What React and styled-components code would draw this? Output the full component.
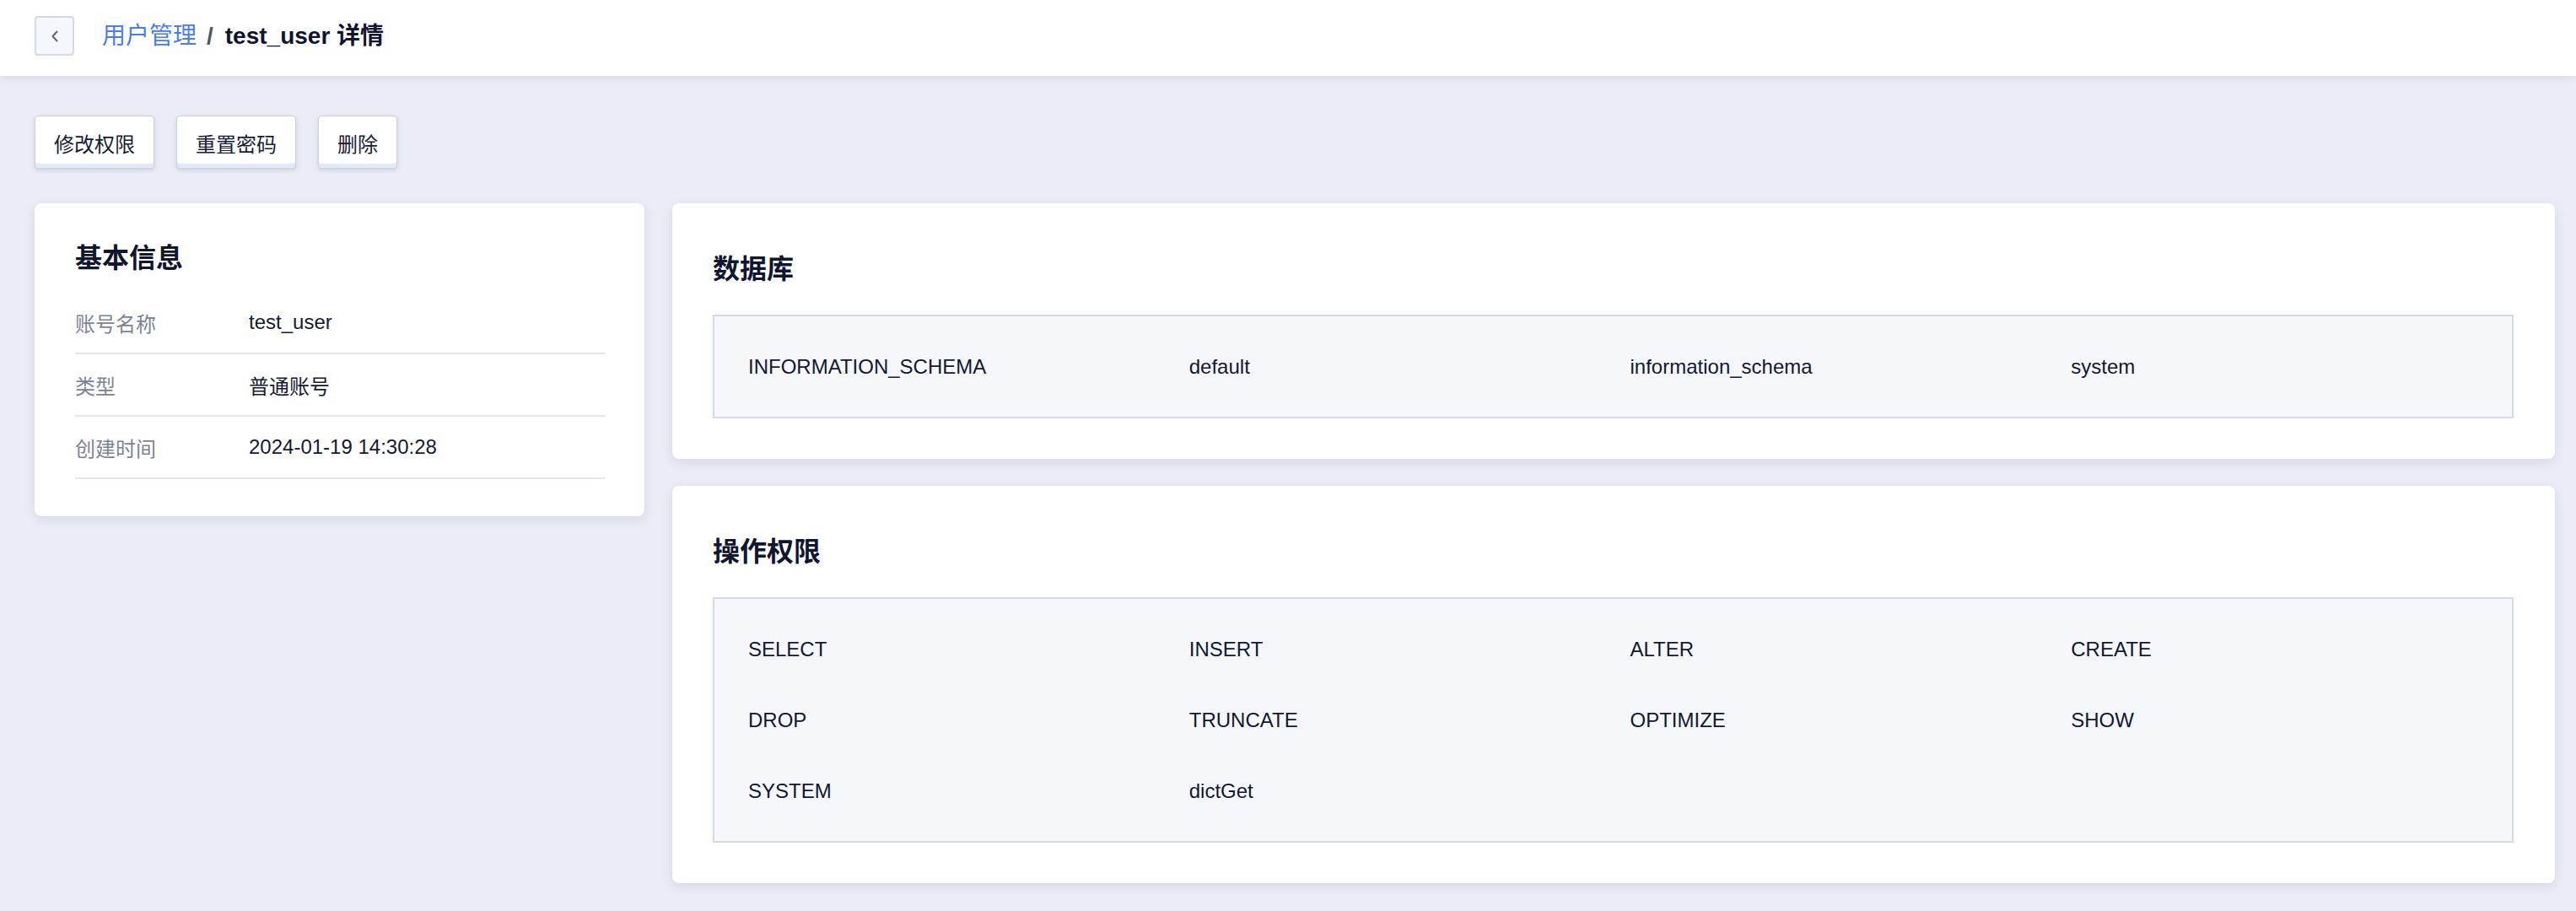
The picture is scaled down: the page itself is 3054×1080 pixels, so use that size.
import React from "react";
import styled, { createGlobalStyle } from "styled-components";

const GlobalStyle = createGlobalStyle`
  html, body {
    margin: 0;
    padding: 0;
    background: #eaedf5;
  }
  body {
    font-family: "Liberation Sans", "Noto Sans CJK SC", sans-serif;
    color: #131a33;
  }
  * { box-sizing: border-box; }
`;

const Page = styled.div`
  min-height: 100vh;
  background: #eaedf5;
`;

const Header = styled.header`
  height: 90px;
  background: #ffffff;
  box-shadow: 0 2px 10px rgba(20, 30, 60, 0.09);
  display: flex;
  align-items: flex-start;
  padding: 19px 40px 0 41px;
  position: relative;
  z-index: 1;
`;

const BackButton = styled.button`
  width: 47px;
  height: 47px;
  border: 2px solid #d3d8ea;
  border-radius: 4px;
  background: #f6f7fc;
  display: flex;
  align-items: center;
  justify-content: center;
  padding: 0;
  cursor: pointer;
`;

const Crumbs = styled.nav`
  display: flex;
  align-items: center;
  height: 47px;
  margin-left: 33px;
  font-size: 28px;
  line-height: 47px;
`;

const CrumbLink = styled.span`
  color: #4b7bf3;
`;

const Sep = styled.span`
  color: #4e5566;
  font-weight: 700;
  padding: 0 14px 0 12px;
`;

const Current = styled.span`
  color: #0f1530;
  font-weight: 700;
`;

const Main = styled.main`
  padding: 47px 25px 20px 41px;
`;

const Toolbar = styled.div`
  display: flex;
  gap: 26px;
  margin-bottom: 41px;
`;

const ActionButton = styled.button`
  height: 63px;
  padding: 2px 22px 0;
  font-family: "Liberation Sans", "Noto Sans CJK SC", sans-serif;
  font-size: 24px;
  color: #161c35;
  background: #ffffff;
  border: 1.5px solid #c9cfdf;
  border-radius: 4px;
  box-shadow: inset 0 -5px 0 #e3e8fb, 0 2px 5px rgba(30, 40, 80, 0.14);
  cursor: pointer;
`;

const Layout = styled.div`
  display: flex;
  align-items: flex-start;
  gap: 33px;
`;

const Card = styled.section`
  background: #ffffff;
  border-radius: 8px;
  box-shadow: 0 4px 14px rgba(25, 35, 75, 0.1);
`;

const InfoCard = styled(Card)`
  width: 723px;
  flex: none;
  padding: 49px 47px 44px 48px;
`;

const RightColumn = styled.div`
  flex: 1;
  display: flex;
  flex-direction: column;
  gap: 32px;
`;

const PanelCard = styled(Card)`
  padding: 62px 49px 48px 48px;
`;

const CardTitle = styled.h2`
  margin: 0;
  font-size: 32px;
  line-height: 32px;
  font-weight: 700;
  color: #10162f;
`;

const InfoList = styled.div`
  margin-top: 24px;
`;

const InfoRow = styled.div`
  display: flex;
  align-items: center;
  height: 74px;
  border-bottom: 2px solid #e3e6ef;
  font-size: 24px;
`;

const InfoLabel = styled.span`
  width: 206px;
  flex: none;
  color: #7b8497;
`;

const InfoValue = styled.span`
  color: #131a33;
`;

const TagBox = styled.div`
  margin-top: 38px;
  background: #f6f7fb;
  border: 2px solid #d5d9eb;
  padding: 48px 0 47px 40px;
  display: grid;
  grid-template-columns: repeat(4, 1fr);
  row-gap: 60px;
`;

const TagItem = styled.span`
  font-size: 24px;
  line-height: 24px;
  color: #111833;
`;

const ChevronLeft = () => (
  <svg width="10" height="14" viewBox="0 0 10 14" fill="none">
    <polyline
      points="7.5,1.5 2.5,7 7.5,12.5"
      stroke="#5f6677"
      strokeWidth="2"
      strokeLinecap="round"
      strokeLinejoin="round"
    />
  </svg>
);

const info = [
  ["账号名称", "test_user"],
  ["类型", "普通账号"],
  ["创建时间", "2024-01-19 14:30:28"],
];

const databases = ["INFORMATION_SCHEMA", "default", "information_schema", "system"];

const permissions = [
  "SELECT",
  "INSERT",
  "ALTER",
  "CREATE",
  "DROP",
  "TRUNCATE",
  "OPTIMIZE",
  "SHOW",
  "SYSTEM",
  "dictGet",
];

export default function App() {
  return (
    <Page>
      <GlobalStyle />
      <Header>
        <BackButton aria-label="返回">
          <ChevronLeft />
        </BackButton>
        <Crumbs>
          <CrumbLink>用户管理</CrumbLink>
          <Sep>/</Sep>
          <Current>test_user 详情</Current>
        </Crumbs>
      </Header>
      <Main>
        <Toolbar>
          <ActionButton>修改权限</ActionButton>
          <ActionButton>重置密码</ActionButton>
          <ActionButton>删除</ActionButton>
        </Toolbar>
        <Layout>
          <InfoCard>
            <CardTitle>基本信息</CardTitle>
            <InfoList>
              {info.map(([label, value]) => (
                <InfoRow key={label}>
                  <InfoLabel>{label}</InfoLabel>
                  <InfoValue>{value}</InfoValue>
                </InfoRow>
              ))}
            </InfoList>
          </InfoCard>
          <RightColumn>
            <PanelCard>
              <CardTitle>数据库</CardTitle>
              <TagBox>
                {databases.map((d) => (
                  <TagItem key={d}>{d}</TagItem>
                ))}
              </TagBox>
            </PanelCard>
            <PanelCard>
              <CardTitle>操作权限</CardTitle>
              <TagBox>
                {permissions.map((p) => (
                  <TagItem key={p}>{p}</TagItem>
                ))}
              </TagBox>
            </PanelCard>
          </RightColumn>
        </Layout>
      </Main>
    </Page>
  );
}
